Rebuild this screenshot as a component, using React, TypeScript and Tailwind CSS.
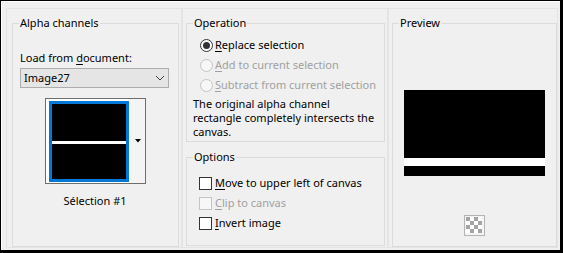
import React from "react";

const Mn = ({ children }: { children: React.ReactNode }) => (
    <span className="underline underline-offset-2 decoration-1">{children}</span>
);

const Radio = ({ checked, disabled }: { checked?: boolean; disabled?: boolean }) => (
    <span
        className={`w-[13px] h-[13px] rounded-full border flex items-center justify-center shrink-0 ${
            disabled ? "border-[#c4c4c4] bg-[#f7f7f7]" : "border-[#333333] bg-white"
        }`}
    >
        {checked && <span className="w-[7px] h-[7px] rounded-full bg-[#333333]" />}
    </span>
);

const Check = ({ disabled }: { disabled?: boolean }) => (
    <span
        className={`w-[13px] h-[13px] border shrink-0 ${
            disabled ? "border-[#c4c4c4] bg-[#f7f7f7]" : "border-[#333333] bg-white"
        }`}
    />
);

const GroupBox = ({
    title,
    className,
    children,
}: {
    title: string;
    className: string;
    children: React.ReactNode;
}) => (
    <fieldset className={`border border-[#dcdcdc] p-0 ${className}`}>
        <legend className="ml-[6px] px-[1px] leading-4">{title}</legend>
        {children}
    </fieldset>
);

const Checker = () => {
    const cells: React.ReactNode[] = [];
    for (let r = 0; r < 4; r++) {
        for (let c = 0; c < 4; c++) {
            if ((r + c) % 2 === 0) {
                cells.push(<rect key={`${r}-${c}`} x={2 + c * 4} y={2 + r * 4} width={4} height={4} fill="#a4a4a4" />);
            }
        }
    }
    return (
        <svg width="21" height="21" viewBox="0 0 21 21">
            <rect x="0.5" y="0.5" width="20" height="20" fill="#f4f4f4" stroke="#b4b4b4" />
            <rect x="2" y="2" width="16" height="16" fill="#ffffff" />
            {cells}
        </svg>
    );
};

export default function App() {
    return (
        <div className="w-[563px] h-[253px] border-t border-l border-r-[3px] border-b-[3px] border-black bg-[#f0f0f0] text-[11px] leading-4 text-black font-['Noto_Sans',sans-serif]">
            <div className="h-full border-t border-l border-white flex pl-[4px] pt-[6px]">
                {/* Alpha channels */}
                <div className="w-[176px] h-[240px] border border-[#e4e4e4] pl-[5px] pt-[6px]">
                    <GroupBox title="Alpha channels" className="w-[167px] h-[232px]">
                        <div className="flex flex-col pl-[7px] pt-[19px]">
                            <div>
                                Load from <Mn>d</Mn>ocument:
                            </div>
                            <div className="mt-[2px] w-[149px] h-[20px] border border-[#adadad] bg-[#e5e5e5] flex items-center justify-between pl-[3px] pr-[3px]">
                                <span>Image27</span>
                                <svg width="10" height="6" viewBox="0 0 10 6">
                                    <polyline points="1,1 5,5 9,1" fill="none" stroke="#444" strokeWidth="1" />
                                </svg>
                            </div>
                            <div className="ml-[25px] mt-[10px] w-[101px] h-[86px] border border-[#6e6e6e] bg-white flex">
                                <div className="pl-[3px] pt-[2px] pb-[1px]">
                                    <div className="w-[80px] h-[81px] border-[3px] border-[#0078d7] bg-black flex flex-col">
                                        <div className="h-[37px]" />
                                        <div className="h-[3px] bg-white" />
                                    </div>
                                </div>
                                <div className="flex-1 bg-[#f4f4f4] border-l border-white flex items-center justify-center">
                                    <svg width="6" height="4" viewBox="0 0 6 4">
                                        <polygon points="0,0 6,0 3,3.5" fill="#000" />
                                    </svg>
                                </div>
                            </div>
                            <div className="mt-[9px] w-[150px] text-center">Sélection #1</div>
                        </div>
                    </GroupBox>
                </div>

                {/* Operation / Options */}
                <div className="w-[206px] h-[240px] border border-[#e4e4e4] pl-[3px] pt-[6px] flex flex-col">
                    <GroupBox title="Operation" className="w-[199px] h-[127px]">
                        <div className="pl-[13px] pt-[4px]">
                            <div className="h-5 flex items-center gap-[2px]">
                                <Radio checked />
                                <span>
                                    <Mn>R</Mn>eplace selection
                                </span>
                            </div>
                            <div className="h-5 flex items-center gap-[2px] text-[#a0a0a0]">
                                <Radio disabled />
                                <span>
                                    <Mn>A</Mn>dd to current selection
                                </span>
                            </div>
                            <div className="h-5 flex items-center gap-[2px] text-[#a0a0a0]">
                                <Radio disabled />
                                <span className="whitespace-nowrap">
                                    <Mn>S</Mn>ubtract from current selection
                                </span>
                            </div>
                        </div>
                        <div className="pl-[6px] mt-[2px] leading-[14px] whitespace-nowrap">
                            The original alpha channel
                            <br />
                            rectangle completely intersects the
                            <br />
                            canvas.
                        </div>
                    </GroupBox>
                    <GroupBox title="Options" className="mt-[7px] w-[199px] h-[97px]">
                        <div className="pl-[12px] pt-[8px]">
                            <div className="h-5 flex items-center gap-[3px]">
                                <Check />
                                <span>
                                    <Mn>M</Mn>ove to upper left of canvas
                                </span>
                            </div>
                            <div className="h-5 flex items-center gap-[3px] text-[#a0a0a0]">
                                <Check disabled />
                                <span>
                                    <Mn>C</Mn>lip to canvas
                                </span>
                            </div>
                            <div className="h-5 flex items-center gap-[3px]">
                                <Check />
                                <span>
                                    <Mn>I</Mn>nvert image
                                </span>
                            </div>
                        </div>
                    </GroupBox>
                </div>

                {/* Preview */}
                <div className="w-[170px] h-[240px] border border-[#e4e4e4] pl-[3px] pt-[6px]">
                    <GroupBox title="Preview" className="w-[165px] h-[232px]">
                        <div className="pl-[11px] pt-[59px] flex flex-col">
                            <div className="w-[141px] flex flex-col">
                                <div className="h-[68px] bg-black" />
                                <div className="h-[8px] bg-white" />
                                <div className="h-[10px] bg-black" />
                            </div>
                            <div className="ml-[60px] mt-[39px]">
                                <Checker />
                            </div>
                        </div>
                    </GroupBox>
                </div>
            </div>
        </div>
    );
}
